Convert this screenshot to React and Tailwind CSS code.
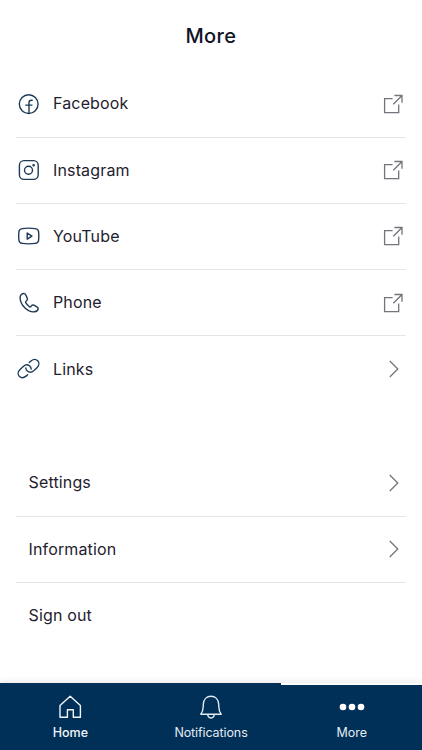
import React from 'react'

const FacebookIcon = () => (
  <>
    <circle cx="12.7" cy="12.1" r="9.4" />
    <path d="M16.2 8.2h-.8c-1.500 0-2.400.9-2.400 2.400v10.600M9.700 13.100H16" />
  </>
)

const InstagramIcon = () => (
  <>
    <rect x="3.400" y="2.600" width="18.800" height="18.800" rx="4.600" />
    <circle cx="12.500" cy="12.300" r="4" />
    <circle cx="17.600" cy="7.200" r="0.600" fill="currentColor" />
  </>
)

const YoutubeIcon = () => (
  <>
    <path d="M6.200 4.600c4.300-.6 8.800-.6 13.100 0 2.100.3 3.100 1.300 3.300 3.200.3 2.800.3 5.600 0 8.400-.2 1.900-1.200 2.900-3.300 3.200-4.300.6-8.800.6-13.100 0-2.100-.3-3.100-1.300-3.300-3.200-.3-2.800-.3-5.600 0-8.400.2-1.900 1.200-2.900 3.300-3.200z" />
    <path d="M11.200 9v6.200l4.700-3.100z" />
  </>
)

const PhoneIcon = () => (
  <path d="M8.600 2.600C6.500 2 4.200 3.700 4.100 6.500c-.1 3.700 1.900 7.500 4.900 10.500 2.900 2.700 6.300 4.200 9.300 3.800 2-.3 3.700-1.700 3.900-3 .1-.8-.3-1.300-1-1.700l-3.300-1.900c-.9-.5-1.700-.3-2.300.5l-.7.900c-.4.500-1 .5-1.500.1-1.500-1.100-2.800-2.500-3.700-4-.4-.6-.2-1.100.3-1.500l.8-.7c.7-.6.9-1.300.5-2.100L9.700 3.700c-.3-.6-.6-1-1.100-1.100z" />
)

const LinkIcon = () => (
  <>
    <path d="M13.300 5.400 15 4c2.200-1.800 5-1.900 6.700-.2 1.700 1.800 1.500 4.700-.5 6.600l-3.500 3.300c-2 1.800-4.600 1.900-6.400.3-.9-.8-1.400-1.800-1.500-3" />
    <path d="M11.700 17.700 10 19.100c-2.200 1.800-5 1.900-6.700.2-1.700-1.800-1.500-4.700.5-6.600l3.500-3.300c2-1.800 4.600-1.900 6.400-.3.9.8 1.400 1.800 1.500 3" />
  </>
)

const Icon = ({ children }) => (
  <svg className="h-6 w-6 shrink-0 text-[#1d3b57]" viewBox="0 0 24 24" fill="none" stroke="currentColor" strokeWidth="1.4" strokeLinecap="round" strokeLinejoin="round">
    {children}
  </svg>
)

const ExternalIcon = () => (
  <svg className="h-6 w-6" viewBox="0 0 24 24" fill="none" stroke="currentColor" strokeWidth="1.3">
    <path d="M11.600 6.600H3.600v14.100h14.100v-8.100M12.300 12.200l8.500-8.500M13.400 3.500H21v7.300" />
  </svg>
)

const ChevronIcon = () => (
  <svg className="h-6 w-6" viewBox="0 0 24 24" fill="none" stroke="currentColor" strokeWidth="1.3">
    <path d="m8.800 4 8 8-8 8" />
  </svg>
)

const socialItems = [
  { label: 'Facebook', icon: <FacebookIcon />, external: true },
  { label: 'Instagram', icon: <InstagramIcon />, external: true },
  { label: 'YouTube', icon: <YoutubeIcon />, external: true },
  { label: 'Phone', icon: <PhoneIcon />, external: true },
  { label: 'Links', icon: <LinkIcon /> },
]

const accountItems = [
  { label: 'Settings', arrow: true },
  { label: 'Information', arrow: true },
  { label: 'Sign out' },
]

const Row = ({ children }) => (
  <li className="flex h-[66.2px] items-center border-b border-[#e6e6e8] pr-px text-base tracking-[0.15px] text-[#1f212e] last:border-b-0">
    {children}
  </li>
)

const App = () => {
  return (
    <div className="flex h-screen flex-col overflow-hidden bg-white font-['Inter',sans-serif]">
      {/* Header */}
      <header className="flex h-[71.4px] items-center justify-center">
        <h1 className="text-xl font-medium tracking-[0.4px] text-[#111426]">More</h1>
      </header>

      <main className="flex-1 px-4">
        {/* Social links */}
        <ul>
          {socialItems.map((item) => (
            <Row key={item.label}>
              <Icon>{item.icon}</Icon>
              <span className="ml-[13px] flex-1 pb-px">{item.label}</span>
              <span className="text-[#73757c]">
                {item.external ? <ExternalIcon /> : <ChevronIcon />}
              </span>
            </Row>
          ))}
        </ul>

        {/* Account */}
        <ul className="mt-12">
          {accountItems.map((item) => (
            <Row key={item.label}>
              <span className="ml-[12.5px] flex-1 pb-px">{item.label}</span>
              {item.arrow && <span className="text-[#73757c]"><ChevronIcon /></span>}
            </Row>
          ))}
        </ul>
      </main>

      {/* Bottom tabs */}
      <nav className="flex h-[67px] items-end text-[12.5px] leading-4 text-[#e3ebf3] shadow-[0_-2px_6px_rgba(0,0,0,0.08)]">
        <button className="flex h-full flex-1 flex-col items-center bg-[#003057] pt-3 font-medium text-[#f2f6fa]">
          <svg className="h-6 w-6" viewBox="0 0 24 24" fill="none" stroke="currentColor" strokeWidth="1.4" strokeLinejoin="round">
            <path d="M2 10.500 12.200 1.300l10.200 9.200v11.700h-7.100v-7.500H9.400v7.500H2z" />
          </svg>
          <span className="mt-[6px]">Home</span>
        </button>
        <button className="flex h-full flex-1 flex-col items-center bg-[#003057] pt-3">
          <svg className="h-6 w-6" viewBox="0 0 24 24" fill="none" stroke="currentColor" strokeWidth="1.4" strokeLinejoin="round">
            <path d="M1.800 19.300c1.500-1.800 2.300-4.200 2.400-7.600l.1-2.500c.3-4.700 3.400-7.900 7.700-7.900s7.400 3.200 7.700 7.900l.1 2.500c.1 3.400.9 5.800 2.400 7.600zM8.700 19.300c.2 2.400 1.500 3.700 3.300 3.700s3.100-1.300 3.300-3.700" />
          </svg>
          <span className="mt-[6px] tracking-[-0.1px]">Notifications</span>
        </button>
        <button className="flex h-[65px] flex-1 flex-col items-center bg-[#003057] pt-[10px]">
          <svg className="h-6 w-6 overflow-visible" viewBox="0 0 24 24" fill="#fff">
            <circle cx="3" cy="12" r="3.3" />
            <circle cx="12" cy="12" r="3.3" />
            <circle cx="21" cy="12" r="3.3" />
          </svg>
          <span className="mt-[6px]">More</span>
        </button>
      </nav>
    </div>
  )
}

export default App
